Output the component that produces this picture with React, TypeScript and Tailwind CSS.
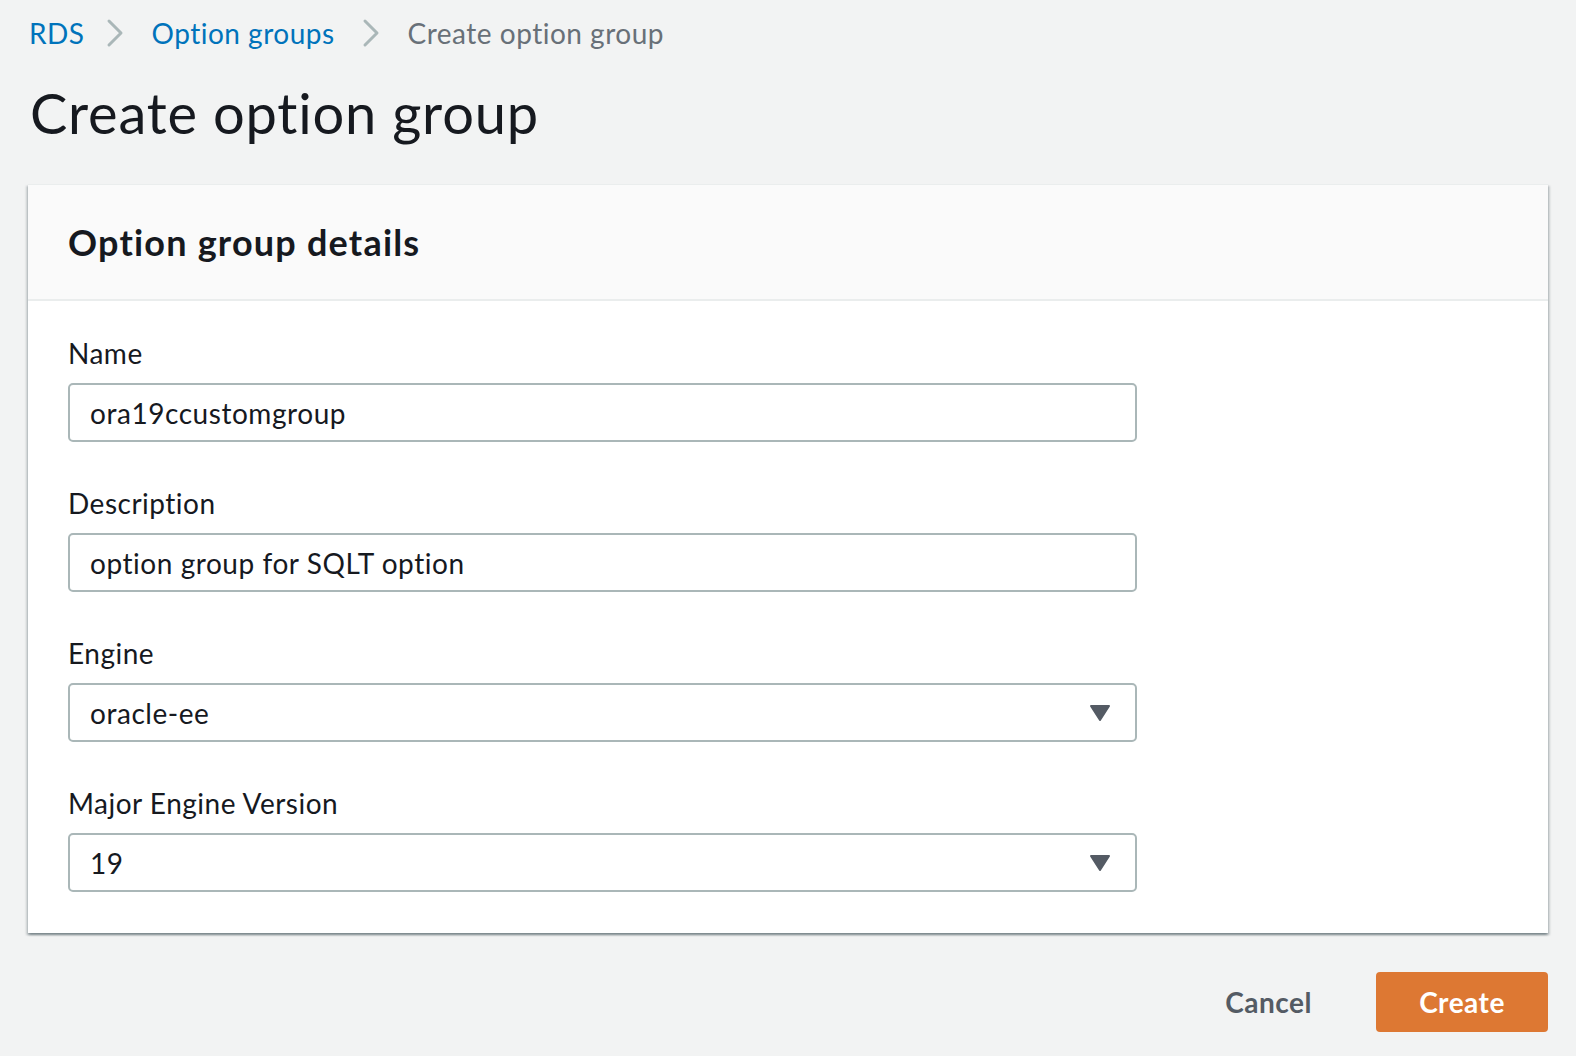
import React from "react";

const font = { fontFamily: "Lato, 'Liberation Sans', sans-serif" };

function Chevron({ wide }: { wide?: boolean }) {
  return (
    <svg width="18" height="30" viewBox="0 0 18 30" className={wide ? "ml-[27px] mr-[28px] shrink-0" : "ml-[21px] mr-[28px] shrink-0"}>
      <path d="M3 3 L15 15 L3 27" fill="none" stroke="#aab7b8" strokeWidth="3" strokeLinecap="round" strokeLinejoin="round" />
    </svg>
  );
}

function Caret() {
  return (
    <svg width="22" height="18" viewBox="0 0 22 18" className="shrink-0">
      <path d="M2 2 L20 2 L11 16 Z" fill="#545b64" stroke="#545b64" strokeWidth="2" strokeLinejoin="round" />
    </svg>
  );
}

function Field({ label, value, select, last }: { label: string; value: string; select?: boolean; last?: boolean }) {
  return (
    <div className={last ? "" : "mb-[41px]"}>
      <div className="text-[28px] leading-[40px] text-[#16191f] mb-[10px] tracking-[0.5px]">{label}</div>
      <div className="w-[1069px] h-[59px] border-2 border-[#aab7b8] rounded-[5px] bg-white flex items-center pl-[20px] pr-[24px] justify-between">
        <span className="text-[28px] text-[#16191f] leading-none tracking-[0.55px]">{value}</span>
        {select && <Caret />}
      </div>
    </div>
  );
}

export default function App() {
  return (
    <div className="w-full min-h-[1056px] bg-[#f2f3f3] px-[28px]" style={font}>
      <div className="h-[66px] flex items-center pl-[1px] text-[28px] tracking-[0.5px]">
        <span className="text-[#0073bb]">RDS</span>
        <Chevron />
        <span className="text-[#0073bb]">Option groups</span>
        <Chevron wide />
        <span className="text-[#687078]">Create option group</span>
      </div>
      <h1 className="mt-[13px] text-[56px] leading-[68px] text-[#16191f] font-normal pl-[2px] tracking-[0.8px]">Create option group</h1>
      <div className="mt-[37px] bg-white shadow-[0_2px_2px_0_rgba(0,28,36,0.3),2px_2px_2px_0_rgba(0,28,36,0.15),-2px_2px_2px_0_rgba(0,28,36,0.15)] border-t border-[#eaeded]">
        <div className="h-[116px] bg-[#fafafa] border-b-2 border-[#eaeded] flex items-center pl-[40px]">
          <h2 className="text-[36px] font-bold text-[#16191f] tracking-[1.2px]">Option group details</h2>
        </div>
        <div className="pl-[40px] pt-[32px] pb-[41px]">
          <Field label="Name" value="ora19ccustomgroup" />
          <Field label="Description" value="option group for SQLT option" />
          <Field label="Engine" value="oracle-ee" select />
          <Field label="Major Engine Version" value="19" select last />
        </div>
      </div>
      <div className="mt-[39px] flex justify-end items-center">
        <button className="h-[60px] px-[40px] text-[28px] font-bold text-[#545b64] mr-[24px] tracking-[0.5px]">Cancel</button>
        <button className="h-[60px] w-[172px] rounded-[4px] bg-[#dd7833] text-white text-[28px] font-bold tracking-[0.5px]">Create</button>
      </div>
    </div>
  );
}
